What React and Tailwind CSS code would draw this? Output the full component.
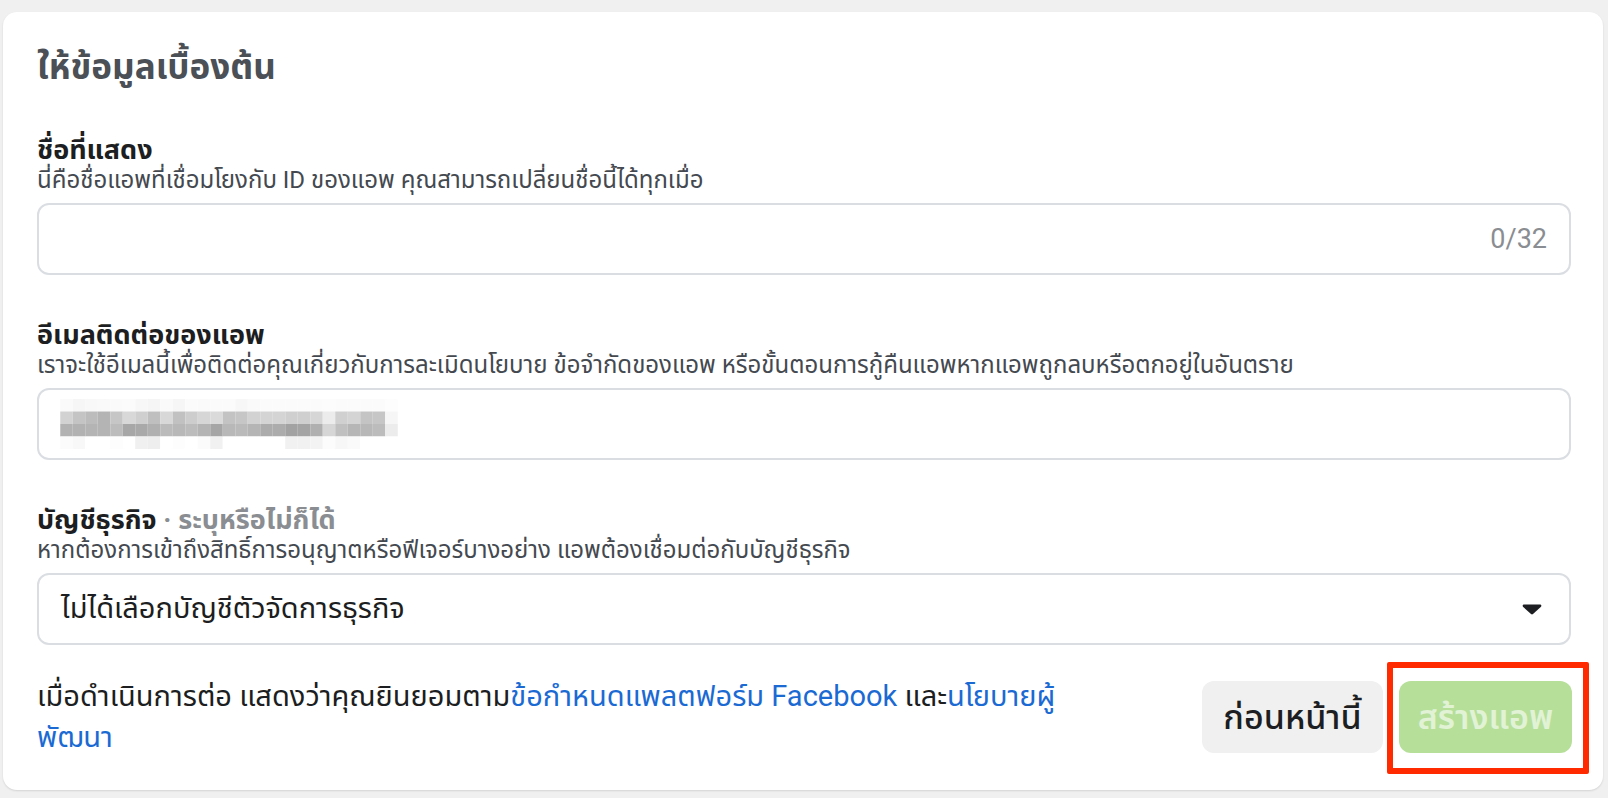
// App.jsx
// Basic info step of the "create app" flow: display name, contact email,
// optional business account, and the footer with terms + action buttons.

import React, { useState } from "react";

const FONT = { fontFamily: "Roboto, 'Noto Sans', 'Noto Sans Thai', sans-serif" };

// pixelated (censored) email, drawn as grey blocks
const BLUR_ROWS = [
  ["#fafafa", "#f6f6f6", "#f8f8f8", "#f9f9f9", "#fafafa", "#fbfbfb", "#f7f7f7", "#f5f5f5", "#fafafa", "#f6f6f6", "#fbfbfb", "#fafafa", "#fbfbfb", "#fbfbfb", "#f7f7f7", "#fafafa", "#fbfbfb", "#fbfbfb", "#fbfbfb", "#fbfbfb", "#fbfbfb", "#fcfcfc", "#fbfbfb", "#fbfbfb", "#fbfbfb", "#fbfbfb", "#fdfdfd"],
  ["#d2d2d2", "#c4c4c4", "#bcbcbc", "#b4b4b4", "#c6c6c6", "#d8d8d8", "#cfcfcf", "#bfbfbf", "#d8d8d8", "#c1c1c1", "#cdcdcd", "#d6d6d6", "#dadada", "#c3c3c3", "#c6c6c6", "#d2d2d2", "#d4d4d4", "#d4d4d4", "#cfcfcf", "#cfcfcf", "#d6d6d6", "#ececec", "#d0d0d0", "#d4d4d4", "#c4c4c4", "#c6c6c6", "#f6f6f6"],
  ["#b2b2b2", "#b2b2b2", "#b4b4b4", "#b4b4b4", "#bcbcbc", "#a7a7a7", "#a9a9a9", "#b0b0b0", "#bbbbbb", "#b8b8b8", "#bcbcbc", "#b4b4b4", "#a6a6a6", "#b8b8b8", "#bababa", "#b5b5b5", "#acacac", "#acacac", "#a2a2a2", "#a4a4a4", "#b0b0b0", "#d6d6d6", "#c0c0c0", "#b6b6b6", "#b8b8b8", "#bcbcbc", "#ececec"],
  ["#fbfbfb", "#f8f8f8", "#ffffff", "#ffffff", "#fdfdfd", "#ffffff", "#f0f0f0", "#eeeeee", "#ffffff", "#fdfdfd", "#ffffff", "#fbfbfb", "#f1f1f1", "#ffffff", "#ffffff", "#ffffff", "#ffffff", "#ffffff", "#f1f1f1", "#f1f1f1", "#f3f3f3", "#fcfcfc", "#f7f7f7", "#fafafa", "#ffffff", "#ffffff", "#ffffff"],
];

function BlurredEmail() {
  return (
    <svg width="338" height="50" viewBox="0 0 324 48" className="block">
      {BLUR_ROWS.map((row, r) =>
        row.map((c, i) => <rect key={r + "-" + i} x={i * 12} y={r * 12} width="12" height="12" fill={c} />)
      )}
    </svg>
  );
}

function Field({ label, optional, hint, children }) {
  return (
    <div>
      <div className="text-[27px] leading-[32px] font-bold text-[#1c1e21]">
        {label}
        {optional && <span className="text-[#8a8d91]"> · {optional}</span>}
      </div>
      <div className="text-[24px] leading-[28px] text-[#444950]">{hint}</div>
      <div className="mt-[9px]">{children}</div>
    </div>
  );
}

export default function App() {
  const [name, setName] = useState("");

  return (
    <div className="min-h-screen bg-[#f0f0f0] pt-[12px] pl-[3px] pr-[5px] pb-[10px]" style={FONT}>
      <div className="bg-white rounded-[14px] shadow-[0_1px_2px_rgba(0,0,0,0.12)] pl-[34px] pr-[32px] pt-[36px] pb-[32px]">
        <h2 className="text-[35px] leading-[40px] font-bold text-[#4b4f56]">ให้ข้อมูลเบื้องต้น</h2>

        <div className="mt-[46px] flex flex-col gap-[44px]">
          <Field label="ชื่อที่แสดง" hint="นี่คือชื่อแอพที่เชื่อมโยงกับ ID ของแอพ คุณสามารถเปลี่ยนชื่อนี้ได้ทุกเมื่อ">
            <div className="h-[72px] border-2 border-[#dadde1] rounded-[12px] flex items-center px-[22px]">
              <input
                value={name}
                onChange={(e) => setName(e.target.value.slice(0, 32))}
                className="flex-1 outline-none text-[28px] text-[#1c1e21] bg-transparent"
              />
              <span className="text-[27px] text-[#8a8d91]">{name.length}/32</span>
            </div>
          </Field>

          <Field
            label="อีเมลติดต่อของแอพ"
            hint="เราจะใช้อีเมลนี้เพื่อติดต่อคุณเกี่ยวกับการละเมิดนโยบาย ข้อจำกัดของแอพ หรือขั้นตอนการกู้คืนแอพหากแอพถูกลบหรือตกอยู่ในอันตราย"
          >
            <div className="h-[72px] border-2 border-[#dadde1] rounded-[12px] flex items-center pl-[21px]">
              <BlurredEmail />
            </div>
          </Field>

          <Field
            label="บัญชีธุรกิจ"
            optional="ระบุหรือไม่ก็ได้"
            hint="หากต้องการเข้าถึงสิทธิ์การอนุญาตหรือฟีเจอร์บางอย่าง แอพต้องเชื่อมต่อกับบัญชีธุรกิจ"
          >
            <button className="w-full h-[72px] border-2 border-[#dadde1] rounded-[12px] flex items-center justify-between pl-[22px] pr-[27px] text-left">
              <span className="text-[29px] text-[#1c1e21]">ไม่ได้เลือกบัญชีตัวจัดการธุรกิจ</span>
              <svg width="20" height="12" viewBox="0 0 20 12">
                <path d="M2 1.5h16c1.2 0 1.8 1.3 1 2.2l-8 7.4c-.6.5-1.4.5-2 0l-8-7.4C.2 2.8.8 1.5 2 1.5z" fill="#1c1e21" />
              </svg>
            </button>
          </Field>
        </div>

        <div className="mt-[31px] flex items-center justify-between">
          <p className="text-[29px] leading-[41px] text-[#1c1e21]">
            เมื่อดำเนินการต่อ แสดงว่าคุณยินยอมตาม
            <a className="text-[#1b6ad3]">ข้อกำหนดแพลตฟอร์ม Facebook</a> และ
            <a className="text-[#1b6ad3]">นโยบายผู้</a>
            <br />
            <a className="text-[#1b6ad3]">พัฒนา</a>
          </p>

          <div className="flex gap-[16px] mr-[-1px]">
            <button className="w-[181px] h-[72px] rounded-[12px] bg-[#f0f0f0] text-[34px] font-medium text-[#1c1e21]">
              ก่อนหน้านี้
            </button>
            <div className="relative">
              <div className="absolute -left-[12px] -right-[17px] -top-[19px] -bottom-[21px] border-[6px] border-[#ff2a00] rounded-[2px]" />
              <button disabled className="w-[173px] h-[72px] rounded-[12px] bg-[#b6df9a] text-[34px] font-semibold text-white/60">
                สร้างแอพ
              </button>
            </div>
          </div>
        </div>
      </div>
    </div>
  );
}
